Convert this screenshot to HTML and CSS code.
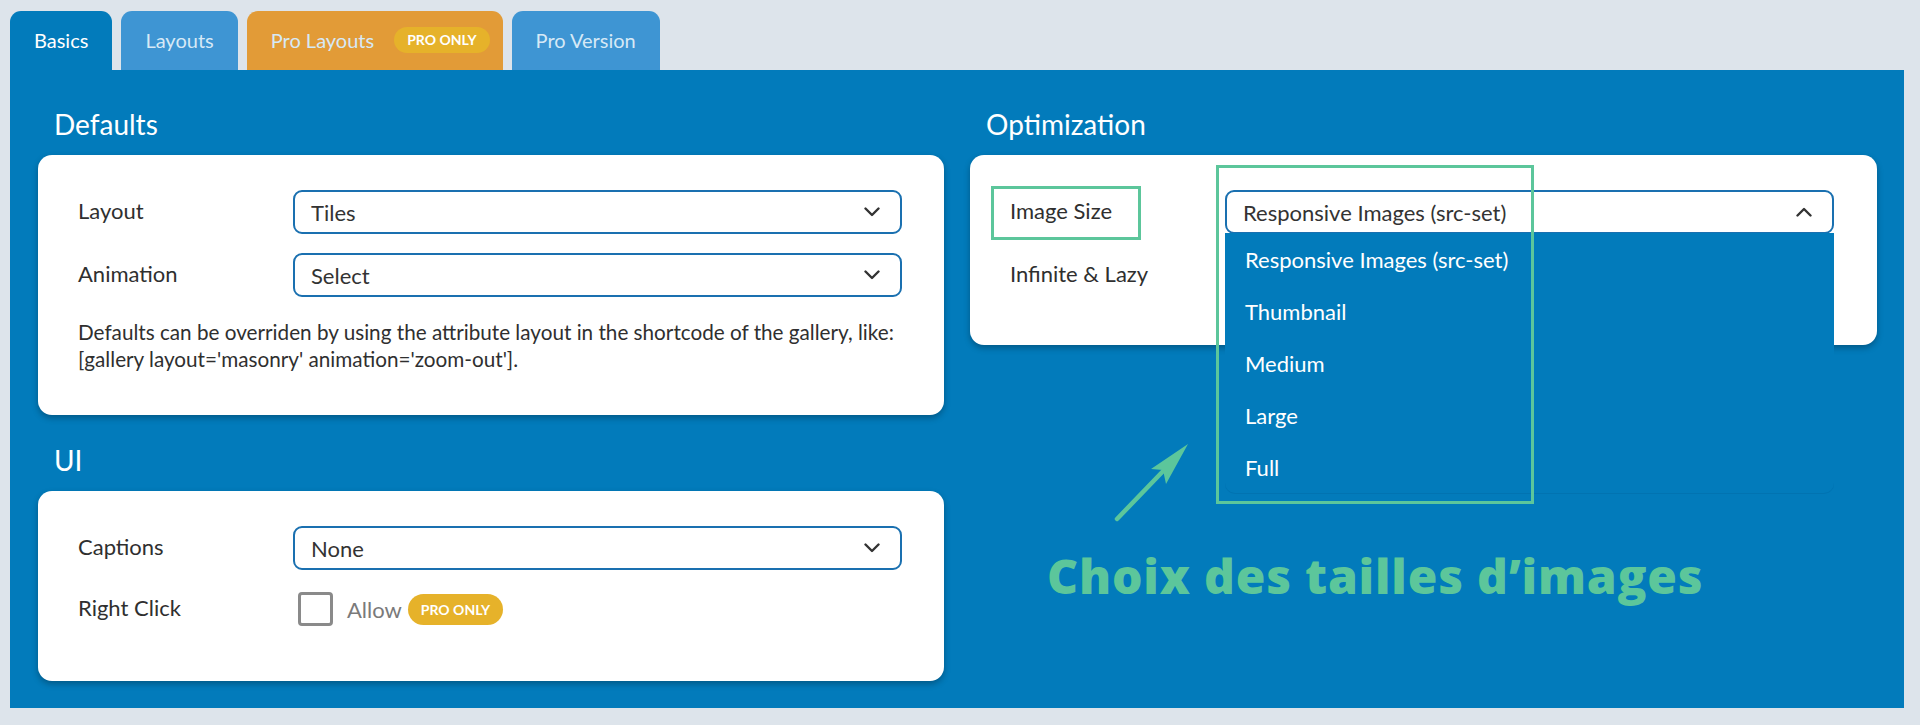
FILE: index.html
```html
<!DOCTYPE html>
<html lang="fr">
<head>
<meta charset="utf-8">
<title>Gallery Settings</title>
<link rel="stylesheet" href="styles.css">
</head>
<body>
<div class="page">
  <div class="tabs">
    <div class="tab tab-active">Basics</div>
    <div class="tab tab-blue">Layouts</div>
    <div class="tab tab-orange">Pro Layouts <span class="badge badge-tab">PRO ONLY</span></div>
    <div class="tab tab-blue">Pro Version</div>
  </div>
  <div class="panel">
    <div class="col">
      <h2 class="heading">Defaults</h2>
      <div class="card card-defaults">
        <div class="row">
          <div class="label">Layout</div>
          <div class="select"><span>Tiles</span><svg class="chev" width="16" height="10" viewBox="0 0 16 10"><polyline points="1.5,1.5 8,8 14.5,1.5" fill="none" stroke="#333" stroke-width="2.4" stroke-linecap="round" stroke-linejoin="round"/></svg></div>
        </div>
        <div class="row">
          <div class="label">Animation</div>
          <div class="select"><span>Select</span><svg class="chev" width="16" height="10" viewBox="0 0 16 10"><polyline points="1.5,1.5 8,8 14.5,1.5" fill="none" stroke="#333" stroke-width="2.4" stroke-linecap="round" stroke-linejoin="round"/></svg></div>
        </div>
        <p class="desc">Defaults can be overriden by using the attribute layout in the shortcode of the gallery, like:<br>[gallery layout='masonry' animation='zoom-out'].</p>
      </div>
      <h2 class="heading heading-ui">UI</h2>
      <div class="card card-ui">
        <div class="row">
          <div class="label">Captions</div>
          <div class="select"><span>None</span><svg class="chev" width="16" height="10" viewBox="0 0 16 10"><polyline points="1.5,1.5 8,8 14.5,1.5" fill="none" stroke="#333" stroke-width="2.4" stroke-linecap="round" stroke-linejoin="round"/></svg></div>
        </div>
        <div class="row row-check">
          <div class="label">Right Click</div>
          <div class="check-wrap"><span class="checkbox"></span><span class="allow">Allow</span><span class="badge badge-field">PRO ONLY</span></div>
        </div>
      </div>
    </div>
    <div class="col">
      <h2 class="heading">Optimization</h2>
      <div class="card card-opt">
        <div class="row">
          <div class="label">Image Size</div>
          <div class="select select-open"><span>Responsive Images (src-set)</span><svg class="chev" width="16" height="10" viewBox="0 0 16 10"><polyline points="1.5,8.5 8,2 14.5,8.5" fill="none" stroke="#333" stroke-width="2.4" stroke-linecap="round" stroke-linejoin="round"/></svg>
            <ul class="dropdown">
              <li>Responsive Images (src-set)</li>
              <li>Thumbnail</li>
              <li>Medium</li>
              <li>Large</li>
              <li>Full</li>
            </ul>
          </div>
        </div>
        <div class="row">
          <div class="label">Infinite &amp; Lazy</div>
          <div></div>
        </div>
      </div>
    </div>
  </div>
  <div class="note-box note-small"></div>
  <div class="note-box note-big"></div>
  <svg class="note-arrow" width="1920" height="725" viewBox="0 0 1920 725">
    <line x1="1117" y1="519" x2="1168" y2="466" stroke="#5cc69b" stroke-width="4.5" stroke-linecap="round"/>
    <polygon points="1188,444 1151,469 1163,470 1166,484" fill="#5cc69b"/>
  </svg>
  <div class="note-text">Choix des tailles d’images</div>
</div>
</body>
</html>
```

FILE: styles.css
```css
* { box-sizing: border-box; }
html, body { margin: 0; padding: 0; }
body {
  background: #dde4eb;
  font-family: Lato, "Open Sans", sans-serif;
  width: 1920px;
  height: 725px;
  overflow: hidden;
}
.page {
  position: relative;
  padding: 11px 0 0 10px;
  width: 1920px;
  height: 725px;
}
.tabs {
  display: flex;
  gap: 9px;
  height: 59px;
}
.tab {
  display: flex;
  align-items: center;
  gap: 20px;
  padding: 0 24px 2px 24px;
  border-radius: 11px 11px 0 0;
  font-size: 20px;
  color: #d6e9f6;
}
.tab-active { background: #027bbb; color: #ffffff; }
.tab-blue { background: #3e95d3; }
.tab-orange { background: #e29b37; padding-right: 13px; }
.badge {
  display: inline-flex;
  align-items: center;
  justify-content: center;
  background: #e6b22a;
  color: #ffffff;
  font-weight: 700;
  font-size: 14px;
  border-radius: 16px;
}
.badge-tab { height: 26px; padding: 0 13px; }
.badge-field { height: 31px; padding: 0 13px; margin-left: 6px; }
.panel {
  width: 1894px;
  height: 638px;
  background: #027bbb;
  display: grid;
  grid-template-columns: 906px 907px;
  column-gap: 26px;
  padding: 38px 27px 28px 28px;
  align-items: start;
}
.heading {
  margin: 0 0 15px 0;
  padding-left: 16px;
  font-size: 28px;
  line-height: 32px;
  font-weight: 400;
  color: #ffffff;
}
.heading-ui { margin-top: 29px; }
.card {
  background: #ffffff;
  border-radius: 14px;
  box-shadow: 0 3px 6px rgba(0, 0, 0, 0.28);
  padding: 35px 42px 48px 40px;
  display: flex;
  flex-direction: column;
  gap: 19px;
}
.card-defaults { padding-bottom: 42px; }
.card-ui { padding-bottom: 52px; }
.card-opt { padding-right: 43px; }
.row {
  display: grid;
  grid-template-columns: 215px 1fr;
  align-items: center;
  height: 44px;
}
.row-check { height: 40px; }
.label {
  font-size: 22px;
  color: #2f2f2f;
  padding-bottom: 3px;
}
.select {
  position: relative;
  height: 44px;
  border: 2px solid #1a70b0;
  border-radius: 9px;
  background: #ffffff;
  display: flex;
  align-items: center;
  justify-content: space-between;
  padding: 0 20px 0 16px;
  font-size: 22px;
  color: #333333;
}
.chev { display: block; }
.dropdown {
  position: absolute;
  top: 41px;
  left: -2px;
  right: -2px;
  margin: 0;
  padding: 0;
  list-style: none;
  background: #027bbb;
  border-radius: 0 0 10px 10px;
  box-shadow: 0 1px 0 rgba(0, 60, 110, 0.12);
  z-index: 2;
}
.dropdown li {
  height: 52px;
  display: flex;
  align-items: center;
  padding-left: 20px;
  color: #ffffff;
  font-size: 22px;
}
.desc {
  margin: 3px 0 0 0;
  font-size: 20.7px;
  line-height: 27px;
  color: #2f2f2f;
}
.check-wrap {
  display: flex;
  align-items: center;
  padding-left: 5px;
}
.checkbox {
  width: 35px;
  height: 34px;
  border: 3px solid #8a8a8a;
  border-radius: 4px;
  margin-right: 14px;
}
.allow {
  font-size: 22px;
  color: #7a7a7a;
}
.note-box {
  position: absolute;
  border: 3px solid #5cc69b;
  z-index: 5;
}
.note-small { left: 991px; top: 186px; width: 150px; height: 54px; }
.note-big { left: 1216px; top: 165px; width: 318px; height: 339px; }
.note-arrow {
  position: absolute;
  left: 0;
  top: 0;
  z-index: 5;
}
.note-text {
  position: absolute;
  left: 1047px;
  top: 546px;
  line-height: 60px;
  font-family: "Open Sans", sans-serif;
  font-weight: 800;
  font-size: 48px;
  letter-spacing: 0.8px;
  color: #5cc69b;
  z-index: 5;
  white-space: nowrap;
}
```
